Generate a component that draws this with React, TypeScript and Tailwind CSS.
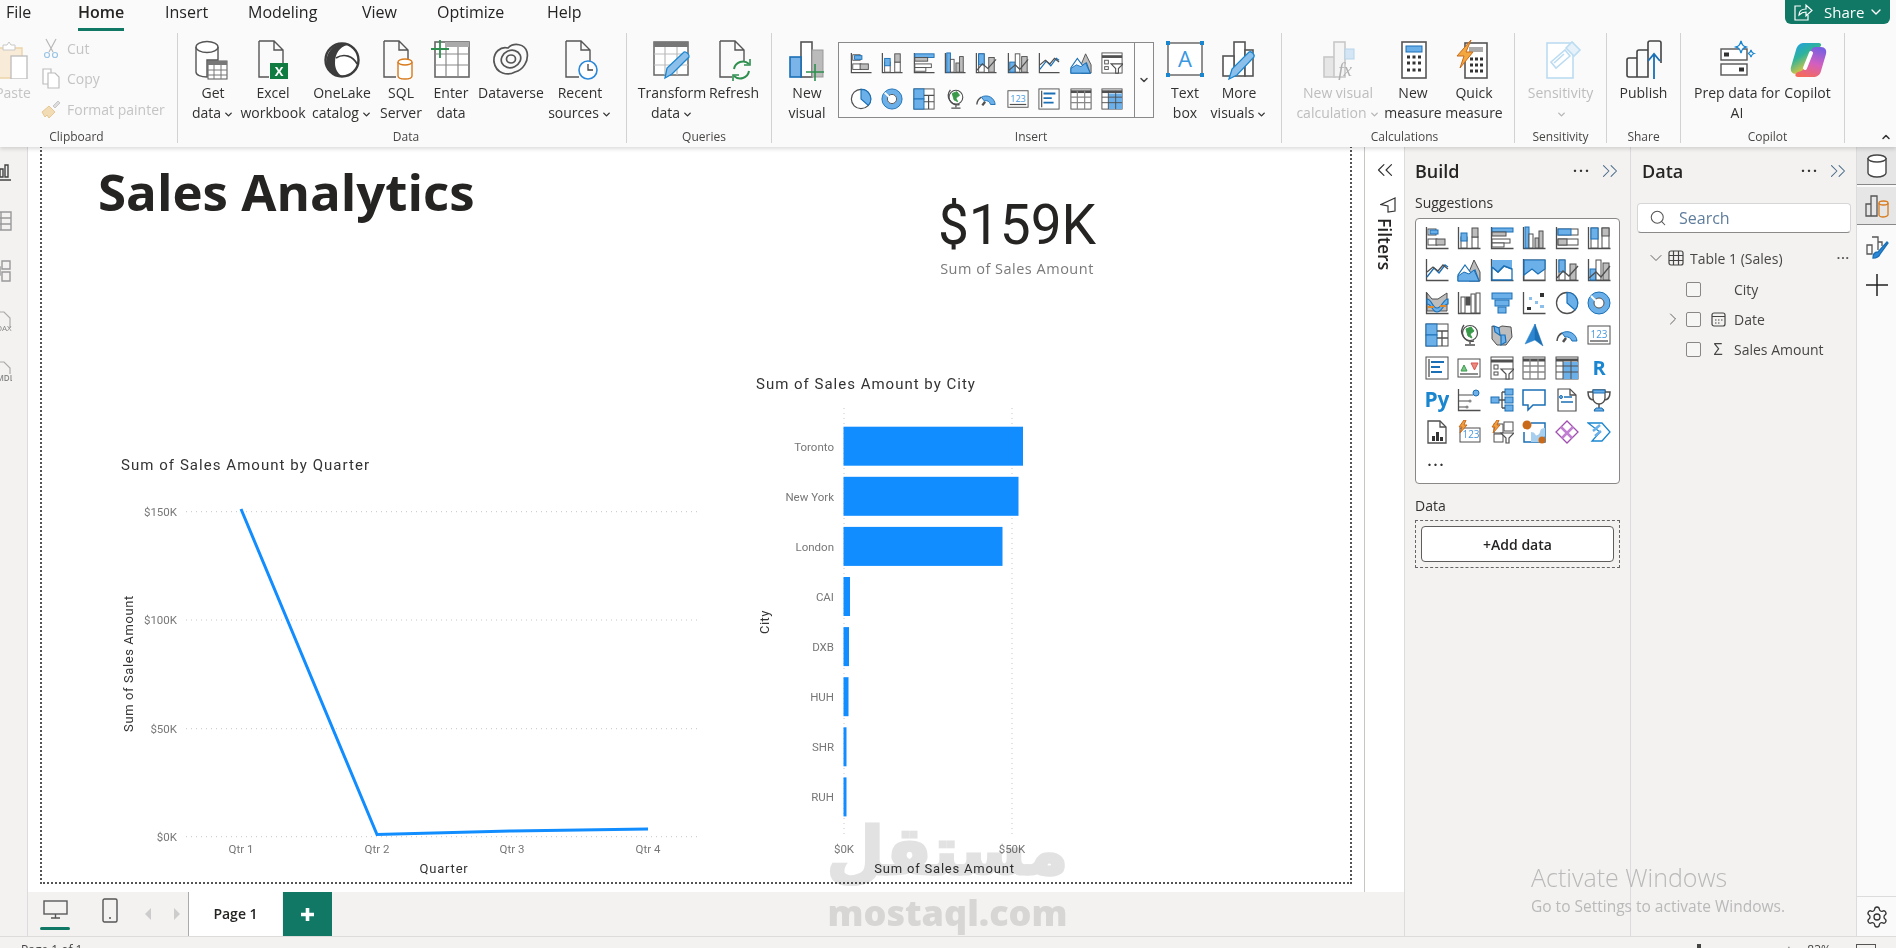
import React from 'react';
import { ChevronDown, ChevronRight, ChevronUp, ChevronsLeft, ChevronsRight, Search, Settings } from 'lucide-react';

const D = '#4f4f4f';
const BL = '#1a6fb5';

function r(x: number, y: number, w: number, h: number, k: 'b' | 'g' | 'w' | 'd') {
  const fill = k === 'b' ? '#6cb0ea' : k === 'g' ? '#bdbdbd' : k === 'd' ? '#4f4f4f' : '#ffffff';
  const stroke = k === 'b' ? BL : D;
  return <rect x={x} y={y} width={w} height={h} fill={fill} stroke={stroke} strokeWidth="1" />;
}
const ax = <path d="M1.5 1v21.5H23.5" fill="none" stroke={D} strokeWidth="1.3" />;
const P = (d: string, c = D, w = 1.3, f = 'none') => <path d={d} stroke={c} strokeWidth={w} fill={f} />;
const T = (s: string, x: number, y: number, size: number, c = '#1a86d0', weight = 700) => (
  <text x={x} y={y} fontSize={size} fill={c} fontWeight={weight} textAnchor="middle" className="font-['Open_Sans',sans-serif]">{s}</text>
);

const viz: Record<string, React.ReactNode> = {
  stackBar: <>{ax}{r(3, 3, 8, 6, 'w')}{r(5, 4, 8, 4, 'b')}{r(3, 13, 9, 6, 'w')}{r(11, 13, 9, 6, 'g')}</>,
  stackCol: <>{ax}{r(4, 11, 6, 11, 'w')}{r(4, 7, 6, 8, 'b')}{r(15, 11, 6, 11, 'w')}{r(15, 2, 6, 9, 'g')}</>,
  clusBar: <>{ax}{r(2, 2, 21, 4, 'b')}{r(2, 6, 14, 4, 'g')}{r(2, 13, 18, 4, 'w')}{r(2, 17, 12, 4, 'w')}</>,
  clusCol: <>{ax}{r(3, 1, 4, 21, 'b')}{r(7, 8, 4, 14, 'w')}{r(13, 12, 4, 10, 'g')}{r(17, 5, 4, 17, 'g')}</>,
  fullBar: <>{ax}{r(3, 3, 20, 6, 'w')}{r(3, 3, 13, 6, 'b')}{r(3, 13, 20, 6, 'w')}{r(3, 13, 9, 6, 'g')}</>,
  fullCol: <>{ax}{r(4, 2, 7, 20, 'w')}{r(4, 2, 7, 11, 'b')}{r(15, 2, 7, 20, 'w')}{r(15, 2, 7, 8, 'g')}</>,
  line: <>{ax}{P('M2 19l7-9 5 5 6-8 3 2', BL)}{P('M2 14l6-5 5 4 5-6 5 4')}</>,
  area: <>{P('M12 14l5-12 6 12v9H12z', D, 1, '#bdbdbd')}{P('M1 23v-6L8 7l6 8 4-3 4 11z', BL, 1.2, '#ffffff')}{P('M1 23v-5l6-4 5 2 5-4 5 11z', BL, 1, '#6cb0ea')}</>,
  stArea: <>{ax}{P('M2 9l6 5 6-6 8 3v11H2z', BL, 1.3, '#ffffff')}{P('M2 2v7l6 5 6-6 8 3V2z', 'none', 0, '#6cb0ea')}{P('M2 9l6 5 6-6 8 3', BL, 1.6)}</>,
  fullArea: <>{ax}{r(2, 2, 21, 20, 'w')}{P('M2 2h21v9l-7 5-6-5-8 6z', BL, 1.2, '#6cb0ea')}</>,
  lineStack: <>{ax}{r(4, 2, 6, 20, 'w')}{r(4, 2, 6, 12, 'b')}{r(15, 6, 6, 16, 'g')}{P('M2 20l6-7 6 5 9-10')}</>,
  lineClus: <>{ax}{r(3, 11, 6, 11, 'b')}{r(9, 2, 5, 20, 'w')}{r(16, 5, 6, 17, 'g')}{P('M2 20l7-6 5 5 9-11')}</>,
  ribbon: <>{ax}{P('M2 2l5 6 6 0 9-6v18H2z', D, 1, '#bdbdbd')}{P('M2 8c5 0 5 9 10 9s6-9 11-9v5c-5 0-6 8-11 8S7 13 2 13z', BL, 1.2, '#6cb0ea')}{P('M3 16h6M15 15h6', '#e08a2c', 2)}</>,
  waterfall: <>{ax}{r(4, 6, 4, 16, 'w')}{r(9, 6, 4, 8, 'd')}{r(14, 3, 4, 19, 'w')}{r(19, 2, 4, 20, 'w')}</>,
  funnel: <>{r(2, 2, 20, 6, 'b')}{r(5, 9, 14, 6, 'b')}{r(8, 16, 8, 6, 'b')}</>,
  scatter: <>{ax}<rect x="5" y="16" width="4" height="3" fill="#333" /><rect x="7" y="6" width="3" height="3" fill="#8cc0ea" /><rect x="13" y="10" width="3" height="3" fill="#8cc0ea" /><rect x="18" y="2" width="4" height="4" fill="#333" /><rect x="18" y="14" width="4" height="3" fill="#8cc0ea" /></>,
  pie: <><circle cx="12" cy="12" r="10.5" fill="#fff" stroke={D} strokeWidth="1.3" />{P('M12 1.5A10.5 10.5 0 0 1 20 19l-8-7z', BL, 1.2, '#6cb0ea')}</>,
  donut: <><circle cx="12" cy="12" r="8" fill="none" stroke="#6cb0ea" strokeWidth="6" /><circle cx="12" cy="12" r="11" fill="none" stroke={BL} strokeWidth="1" /><circle cx="12" cy="12" r="5" fill="#fff" stroke={D} strokeWidth="1" />{P('M4 5l5 5', '#fff', 2)}</>,
  tree: <>{r(1, 1, 22, 22, 'w')}{r(1, 1, 11, 11, 'b')}{r(1, 12, 11, 11, 'b')}{P('M12 8h11M17 8v15M12 15h11')}</>,
  globe: <><circle cx="13" cy="10" r="7.5" fill="#fff" stroke={D} strokeWidth="1.2" />{P('M9 6l5-2 3 4-4 3 2 4-4-2z', '#3a9a4a', 1, '#3a9a4a')}{P('M7 2a10 10 0 0 0 10 16M13 18v3M8 22h10', D, 1.4)}</>,
  map: <>{P('M2 3l6 2 4-2 9 1 1 10-6 8-9 0-5-6z', D, 1, '#bdbdbd')}{P('M4 3l5 2 1 7 5 0 1 7-5 3 0-9-6-4z', BL, 1.2, '#6cb0ea')}</>,
  arrow: <>{P('M13 1L3 21l10-4z', '#2f86d0', .5, '#2f86d0')}{P('M13 1l8 22-8-6z', '#1a6fb5', .5, '#1a6fb5')}</>,
  gauge: <>{P('M2 18a10 10 0 0 1 5-8', D, 1.5)}{P('M7 10a10 10 0 0 1 15 8h-5a6 6 0 0 0-7-4z', BL, 1, '#6cb0ea')}{P('M8 19l3-4', D, 2.5)}</>,
  card: <>{r(1, 3, 22, 18, 'w')}{P('M3 18h18')}{T('123', 12, 15, 10, '#4a9ade', 400)}</>,
  multi: <>{r(1, 1, 22, 22, 'w')}{P('M4 3v18')}{P('M6 6h13M6 11h9M6 16h11', BL, 2)}</>,
  kpi: <>{r(1, 3, 22, 18, 'w')}{P('M3 18h18')}{P('M4 15l3-6 3 6z', '#3a9a4a', 1, '#7ac48a')}{P('M14 7h7l-3.5 7z', '#d9534f', 1, '#e88a80')}</>,
  slicer: <>{r(1, 1, 22, 22, 'w')}{P('M1 5h22', D, 3)}{r(4, 9, 4, 4, 'w')}{r(4, 16, 4, 3, 'w')}{P('M11 13h13l-5 5v5h-3v-5z', D, 1.2, '#fff')}</>,
  table: <>{r(1, 1, 22, 22, 'w')}{P('M1 4h22', D, 3)}{P('M1 10h22M1 16h22M8 3v20M16 3v20', '#888')}</>,
  matrix: <>{r(1, 1, 22, 22, 'w')}{P('M1 4h22', D, 3)}<rect x="8" y="6" width="15" height="17" fill="#6cb0ea" />{P('M1 10h22M1 16h22M8 3v20M16 3v20', D, 1)}</>,
  r: <>{T('R', 12, 19, 20)}</>,
  py: <>{T('Py', 12, 19, 21)}</>,
  key: <>{ax}{P('M2 7h14M2 13h10M2 19h7', D, 1.2)}<circle cx="19" cy="5" r="3" fill="#6cb0ea" stroke={BL} /><circle cx="13" cy="13" r="1.6" fill="#888" /><circle cx="10" cy="19" r="1.6" fill="#888" /></>,
  decomp: <>{r(1, 9, 8, 6, 'b')}{r(15, 1, 8, 6, 'b')}{r(15, 9, 8, 6, 'b')}{r(15, 17, 8, 6, 'b')}{P('M9 12h6M12 4v16M12 4h3M12 20h3')}</>,
  qa: <>{P('M1 2h22v15H11l-5 5v-5H1z', BL, 1.5, '#fff')}</>,
  narr: <>{P('M3 1h12l6 6v16H3z', D, 1.2, '#fff')}{P('M15 1v6h6')}<circle cx="6" cy="9" r="1.5" fill="#6cb0ea" stroke={BL} />{P('M9 9h8M6 14h12', BL, 1.3)}</>,
  goal: <>{P('M6 2h12v8a6 6 0 0 1-12 0z', D, 1.3, '#fff')}{P('M6 2h12v3H6z', BL, 1, '#6cb0ea')}{P('M6 4H1c0 5 2 8 6 8M18 4h5c0 5-2 8-6 8M12 16v4M7 22h10', D, 1.5)}{P('M9 20h6l2 3H7z', BL, 1, '#6cb0ea')}</>,
  page: <>{P('M3 1h12l6 6v16H3z', D, 1.3, '#fff')}{P('M15 1v6h6')}<rect x="7" y="16" width="3" height="5" fill="#333" /><rect x="11" y="12" width="3" height="9" fill="#333" /><rect x="15" y="17" width="3" height="4" fill="#333" /></>,
  lcard: <>{r(3, 8, 20, 14, 'w')}{T('123', 14, 18, 10, '#4a9ade', 400)}{P('M7 0L2 7h3l-2 6 7-8H7l2-5z', '#c96a1a', 1, '#f0a040')}</>,
  lslicer: <>{r(4, 4, 9, 9, 'w')}{r(14, 2, 9, 9, 'w')}{r(4, 14, 9, 8, 'w')}{P('M11 13h13l-5 5v5h-3v-5z', D, 1.2, '#fff')}{P('M7 0L2 7h3l-2 6 7-8H7l2-5z', '#c96a1a', 1, '#f0a040')}</>,
  azure: <>{P('M9 3h14v19H2V12', BL, 1.5, '#fff')}{P('M9 12c6 0 3 6 8 2 2-2 0-6 6-6v8l-6 6H9z', '#6cb0ea', 0, '#a8cfee')}<circle cx="5" cy="5" r="4.5" fill="#c96a1a" /><circle cx="20" cy="20" r="3.5" fill="#c96a1a" /></>,
  papps: <>{P('M12 1l11 11-11 11L1 12z', '#a04fb0', 1.3, '#fff')}{P('M6 7l11 11M18 7L7 18', '#c07fd0', 2.5)}</>,
  pauto: <>{P('M1 3h14l8 9-8 9H5l8-9z', '#1a86d0', 1.3, '#fff')}{P('M6 11l7-6M8 16l6-5', '#6cb0ea', 2.5)}</>,
};

function Viz({ name, size = 24 }: { name: string; size?: number }) {
  return <svg width={size} height={size} viewBox="0 0 24 24">{viz[name]}</svg>;
}

const suggestions = [
  'stackBar', 'stackCol', 'clusBar', 'clusCol', 'fullBar', 'fullCol',
  'line', 'area', 'stArea', 'fullArea', 'lineStack', 'lineClus',
  'ribbon', 'waterfall', 'funnel', 'scatter', 'pie', 'donut',
  'tree', 'globe', 'map', 'arrow', 'gauge', 'card',
  'multi', 'kpi', 'slicer', 'table', 'matrix', 'r',
  'py', 'key', 'decomp', 'qa', 'narr', 'goal',
  'page', 'lcard', 'lslicer', 'azure', 'papps', 'pauto',
];
const galleryIcons = [
  'stackBar', 'stackCol', 'clusBar', 'clusCol', 'lineStack', 'lineClus', 'line', 'area', 'slicer',
  'pie', 'donut', 'tree', 'globe', 'gauge', 'card', 'multi', 'table', 'matrix',
];

const S = { fill: 'none', stroke: '#555', strokeWidth: 1.4 };
const bars = (c = '#555', f = '#fff') => (
  <>
    <rect x="15" y="2" width="11" height="34" fill={f} stroke={c} strokeWidth="1.6" />
    <rect x="4" y="16" width="11" height="20" fill={f} stroke={c} strokeWidth="1.6" />
  </>
);

const large: Record<string, React.ReactNode> = {
  getData: (
    <>
      <path d="M3 7v25c0 3 5 5 11 5V20h11V7" {...S} fill="#fff" />
      <ellipse cx="14" cy="7" rx="11" ry="5.5" {...S} fill="#fff" />
      <rect x="15" y="21" width="19" height="18" fill="#fff" stroke="#555" />
      <rect x="15" y="21" width="19" height="4" fill="#777" />
      <path d="M15 30h19M15 35h19M21 25v14M28 25v14" stroke="#777" />
    </>
  ),
  excel: (
    <>
      <path d="M6 1h15l9 9v16 M6 1v36h10 M21 1v9h9" {...S} />
      <rect x="17" y="23" width="18" height="16" fill="#107c41" />
      <text x="26" y="36" fontSize="13" fontWeight="700" fill="#fff" textAnchor="middle" className="font-['Open_Sans',sans-serif]">X</text>
    </>
  ),
  onelake: (
    <>
      <circle cx="20" cy="20" r="16.5" fill="#fff" stroke="#3c3c3c" strokeWidth="2.4" />
      <path d="M5 17C8 6 18 1 25 5c-7 2-12 8-12 18 0 6 3 11 7 13C8 36 2 27 5 17z" fill="#3c3c3c" />
      <path d="M14 18c8-5 17-2 21 6" fill="none" stroke="#3c3c3c" strokeWidth="1.6" />
    </>
  ),
  sql: (
    <>
      <path d="M3 1h15l9 9v12 M3 1v36h12 M18 1v9h9" {...S} />
      <path d="M17 22v14c0 2 3 3 7 3s7-1 7-3V22" fill="#fff" stroke="#d87a1e" strokeWidth="1.4" />
      <ellipse cx="24" cy="22" rx="7" ry="3" fill="#fff" stroke="#d87a1e" strokeWidth="1.4" />
    </>
  ),
  enter: (
    <>
      <rect x="4" y="2" width="34" height="35" fill="#fff" stroke="#666" strokeWidth="1.6" />
      <rect x="14" y="2" width="24" height="5" fill="#aaa" />
      <path d="M4 14h34M4 25h34M15 7v30M27 7v30" stroke="#888" strokeWidth="1.2" />
      <path d="M0 9h18M9 0v18" stroke="#2f8f4f" strokeWidth="1.8" />
    </>
  ),
  dataverse: (
    <g fill="none" stroke="#555" strokeWidth="1.7">
      <path d="M3 22C2 12 10 6 17 8c6-6 17-4 19 4 2 9-4 18-12 20-7 4-19 2-21-10z" />
      <ellipse cx="20" cy="19" rx="10" ry="8.5" transform="rotate(-25 20 19)" />
      <ellipse cx="20" cy="19" rx="4.5" ry="4" />
    </g>
  ),
  recent: (
    <>
      <path d="M6 1h15l9 9v14 M6 1v36h13 M21 1v9h9" {...S} />
      <circle cx="28" cy="30" r="9" fill="#fff" stroke="#2b88d8" strokeWidth="1.6" />
      <path d="M28 24v6h5" fill="none" stroke="#444" strokeWidth="1.3" />
    </>
  ),
  transform: (
    <>
      <rect x="2" y="2" width="34" height="33" fill="#fff" stroke="#666" strokeWidth="1.5" />
      <rect x="2" y="2" width="34" height="5" fill="#777" />
      <path d="M2 14h34M2 25h34M13 7v28M25 7v28" stroke="#bbb" strokeWidth="1.2" />
      <path d="M13 38l2-10 17-16c2-1 6 3 5 5L20 34z" fill="#8cc0ea" stroke="#1a86d0" strokeWidth="1.3" />
    </>
  ),
  refresh: (
    <>
      <path d="M6 1h15l9 9v12 M6 1v36h12 M21 1v9h9" {...S} />
      <path d="M20 29a9 9 0 0 1 15-5M35 31a9 9 0 0 1-15 5" fill="none" stroke="#2f8f4f" strokeWidth="2" />
      <path d="M36 19v6h-6M19 41v-6h6" fill="none" stroke="#2f8f4f" strokeWidth="1.6" />
    </>
  ),
  newVisual: (
    <>
      <rect x="14" y="2" width="11" height="35" fill="#fff" stroke="#555" strokeWidth="1.6" />
      <rect x="3" y="17" width="11" height="20" fill="#7ab4e8" stroke="#1a6fb5" strokeWidth="1.6" />
      <rect x="25" y="10" width="11" height="27" fill="#bbb" stroke="#999" />
      <path d="M19 32h18M28 24v17" stroke="#2f8f4f" strokeWidth="1.6" />
    </>
  ),
  textBox: (
    <>
      <rect x="3" y="3" width="34" height="32" fill="#fff" stroke="#555" strokeWidth="1.3" />
      {[[3, 3], [37, 3], [3, 35], [37, 35]].map(([x, y]) => <rect key={`${x}${y}`} x={x - 2} y={y - 2} width="4" height="4" fill="#1a86d0" />)}
      <text x="20" y="27" fontSize="22" fill="#3a97e0" textAnchor="middle" className="font-['Open_Sans',sans-serif]">A</text>
    </>
  ),
  more: (
    <>
      {bars()}
      <rect x="26" y="10" width="8" height="26" fill="#fff" stroke="#555" strokeWidth="1.6" />
      <path d="M10 39l3-10 17-17c2-1 6 2 5 5L18 35z" fill="#8cc0ea" stroke="#1a86d0" strokeWidth="1.3" />
    </>
  ),
  calc: (
    <>
      <rect x="6" y="17" width="11" height="20" fill="#e6e6e6" stroke="#c8c8c8" strokeWidth="1.6" />
      <rect x="16" y="2" width="11" height="35" fill="#f4f4f4" stroke="#c8c8c8" strokeWidth="1.6" />
      <rect x="27" y="9" width="9" height="10" fill="#d4e6f5" stroke="#b8d4ea" />
      <text x="27" y="36" fontSize="19" fontStyle="italic" fill="#b0b0b0" textAnchor="middle" className="font-['Liberation_Serif',serif]">fx</text>
    </>
  ),
  measure: (
    <>
      <rect x="9" y="2" width="24" height="36" fill="#fff" stroke="#555" strokeWidth="1.6" />
      <rect x="13" y="6" width="16" height="6" fill="#6cb0ea" stroke="#1a6fb5" />
      <path d="M14 17h3M19.500 17h3M25 17h3M14 23h3M19.500 23h3M25 23h3M14 30h3M19.500 30h3M25 30h3" stroke="#333" strokeWidth="3" />
    </>
  ),
  quick: (
    <>
      <rect x="11" y="3" width="22" height="35" fill="#fff" stroke="#555" strokeWidth="1.6" />
      <rect x="15" y="7" width="14" height="5" fill="#aaa" />
      <path d="M16 19h3M21 19h3M26 19h3M16 25h3M21 25h3M26 25h3M16 31h3M21 31h3M26 31h3" stroke="#333" strokeWidth="3" />
      <path d="M17 0L3 16h7L6 28l13-16h-7l5-12z" fill="#f2a740" stroke="#c96a1a" strokeWidth="1" />
    </>
  ),
  sensitivity: (
    <>
      <rect x="6" y="3" width="26" height="35" fill="#fff" stroke="#bcdcf2" strokeWidth="1.6" />
      <path d="M10 22l14-12 5 6-14 12zM13 23l10-9" fill="#fff" stroke="#bcdcf2" strokeWidth="1.6" />
      <path d="M25 8l6-6 8 8-6 6z" fill="#e6f1fa" stroke="#bcdcf2" strokeWidth="1.6" />
    </>
  ),
  publish: (
    <>
      <path d="M13 37V18h-8a2 2 0 0 0-2 2v15a2 2 0 0 0 2 2h8h11V3a2 2 0 0 1 2-2h9a2 2 0 0 1 2 2v20 M13 18V12a2 2 0 0 1 2-2h9" fill="none" stroke="#444" strokeWidth="1.6" />
      <path d="M30 39V14M24 21l6-7 6 7" fill="none" stroke="#1a6fb5" strokeWidth="1.8" />
    </>
  ),
  prep: (
    <>
      <rect x="4" y="9" width="26" height="11" fill="#fff" stroke="#555" strokeWidth="1.4" />
      <rect x="7" y="12.500" width="5" height="4" fill="#333" />
      <rect x="4" y="24" width="26" height="11" fill="#fff" stroke="#555" strokeWidth="1.4" />
      <rect x="22" y="27.500" width="5" height="4" fill="#333" />
      <path d="M24 1c1 4 2 5 5 6-3 1-4 2-5 6-1-4-2-5-5-6 3-1 4-2 5-6z" fill="#fff" stroke="#1a86d0" strokeWidth="1.4" />
      <path d="M34 10c.6 2.500 1 3 3 3.500-2 .6-2.400 1-3 3.500-.6-2.500-1-3-3-3.500 2-.5 2.400-1 3-3.500z" fill="#fff" stroke="#1a86d0" strokeWidth="1.2" />
    </>
  ),
  copilot: (
    <>
      <defs>
        <linearGradient id="cpA" x1="0" y1="0" x2="0.6" y2="1">
          <stop offset="0" stopColor="#1f9cf0" />
          <stop offset=".45" stopColor="#2fb39a" />
          <stop offset=".8" stopColor="#c8c34a" />
          <stop offset="1" stopColor="#f5a03a" />
        </linearGradient>
        <linearGradient id="cpB" x1="0.6" y1="0" x2="0.3" y2="1">
          <stop offset="0" stopColor="#7a5fe0" />
          <stop offset=".5" stopColor="#d25fc0" />
          <stop offset="1" stopColor="#f56a5a" />
        </linearGradient>
      </defs>
      <path d="M15 3h16c3 0 3 4-1 5-5 1-8 5-9 10l-3 11c-1 3-3 5-6 5H8c-4 0-6-3-5-7l5-17c1-4 4-7 7-7z" fill="url(#cpA)" />
      <path d="M25 37H10c-3 0-4-3 0-5 5-1 8-4 9-9l3-11c1-3 3-5 6-5h5c4 0 6 3 5 7l-5 17c-1 4-4 6-8 6z" fill="url(#cpB)" />
      <path d="M23 13l-6 15" stroke="#fff" strokeWidth="4" strokeLinecap="round" />
    </>
  ),
};

function Big({ name }: { name: string }) {
  return <svg width="40" height="40" viewBox="0 0 40 40" className="overflow-visible">{large[name]}</svg>;
}

const Caret = ({ muted }: { muted?: boolean }) => (
  <ChevronDown className={`ml-[2px] inline h-[11px] w-[11px] ${muted ? 'text-[#b5b5b5]' : 'text-[#333]'}`} strokeWidth={3} />
);

type BtnProps = { icon: string; lines: React.ReactNode[]; w: string; muted?: boolean };

function RibbonBtn({ icon, lines, w, muted }: BtnProps) {
  return (
    <div className={`flex shrink-0 flex-col items-center pt-2 ${w} ${muted ? 'text-[#bdbdbd]' : 'text-[#323130]'}`}>
      <div className="flex h-[38px] w-[40px] items-center justify-center"><Big name={icon} /></div>
      <div className="mt-1 whitespace-nowrap text-center text-[14px] leading-[20px]">
        {lines.map((l, i) => <div key={i}>{l}</div>)}
      </div>
    </div>
  );
}

function Group({ title, w, children }: { title: string; w: string; children: React.ReactNode }) {
  return (
    <div className={`mt-[7px] h-[110px] shrink-0 border-r border-[#d2d2d2] ${w}`}>
      <div className="flex h-[94px]">{children}</div>
      <div className="h-5 text-center text-[12px] leading-5 text-[#484644]">{title}</div>
    </div>
  );
}

function Clipboard() {
  const rows = [
    { label: 'Cut', icon: <g fill="none" stroke="#b8b8b8" strokeWidth="1.2"><path d="M5 1l7 13M15 1L8 14" /><circle cx="6" cy="17" r="2.500" stroke="#9cc4e4" /><circle cx="14" cy="17" r="2.500" stroke="#9cc4e4" /></g> },
    { label: 'Copy', icon: <g fill="#fff" stroke="#bcbcbc" strokeWidth="1.2"><path d="M2 1h8v15H2z" /><path d="M7 5h7l4 4v11H7z" /></g> },
    { label: 'Format painter', icon: <g stroke="#c8c8c8"><path d="M12 7l5-5 2 2-5 5z" fill="#ddd" /><path d="M1 13l7-6 6 6-6 6-2-3-2 2z" fill="#f2dcb6" stroke="#e5c894" /></g> },
  ];
  return (
    <div className="ml-[10px] flex flex-col">
      {rows.map((row) => (
        <div key={row.label} className="flex h-[30.5px] items-center text-[14px] text-[#c4c4c4]">
          <svg width="20" height="21" viewBox="0 0 20 21">{row.icon}</svg>
          <span className="ml-[6px] whitespace-nowrap">{row.label}</span>
        </div>
      ))}
    </div>
  );
}

function Ribbon() {
  return (
    <div className="flex h-[121px]">
      <Group title="Clipboard" w="-ml-[24px] w-[202px]">
        <div className="ml-[19px] flex w-[36px] shrink-0 flex-col items-center pt-2 text-[#c4c4c4]">
          <svg width="36" height="38" viewBox="0 0 36 38">
            <path d="M1 7h26v30H1z" fill="#f8ecd8" stroke="#ecd3a8" strokeWidth="1.4" />
            <path d="M8 9V4h4l2-3 2 3h4v5z" fill="#fff" stroke="#c8c8c8" />
            <rect x="16" y="15" width="16" height="23" fill="#fff" stroke="#bcbcbc" strokeWidth="1.3" />
          </svg>
          <div className="mt-1 text-[14px] leading-[20px]">Paste</div>
        </div>
        <Clipboard />
      </Group>
      <Group title="Data" w="w-[449px] pl-[8px]">
        <RibbonBtn icon="getData" w="w-[54px]" lines={['Get', <>data<Caret /></>]} />
        <RibbonBtn icon="excel" w="w-[66px]" lines={['Excel', 'workbook']} />
        <RibbonBtn icon="onelake" w="w-[72px]" lines={['OneLake', <>catalog<Caret /></>]} />
        <RibbonBtn icon="sql" w="w-[46px]" lines={['SQL', 'Server']} />
        <RibbonBtn icon="enter" w="w-[54px]" lines={['Enter', 'data']} />
        <RibbonBtn icon="dataverse" w="w-[66px]" lines={['Dataverse']} />
        <RibbonBtn icon="recent" w="w-[72px]" lines={['Recent', <>sources<Caret /></>]} />
      </Group>
      <Group title="Queries" w="w-[145px] pl-[10px]">
        <RibbonBtn icon="transform" w="w-[70px]" lines={['Transform', <>data<Caret /></>]} />
        <RibbonBtn icon="refresh" w="w-[54px]" lines={['Refresh']} />
      </Group>
      <Group title="Insert" w="w-[510px] pl-[9px]">
        <RibbonBtn icon="newVisual" w="w-[52px]" lines={['New', 'visual']} />
        <div className="ml-[5px] mt-[9px] flex h-[76px] w-[316px] shrink-0 border border-[#8a8a8a] bg-white/40">
          <div className="grid w-[295px] grid-cols-9 content-between px-[6px] pb-[7px] pt-[9px]">
            {galleryIcons.map((n, i) => (
              <div key={i} className="flex justify-center"><Viz name={n} size={22} /></div>
            ))}
          </div>
          <div className="flex flex-1 items-center justify-center border-l border-[#8a8a8a]">
            <ChevronDown className="h-3 w-3 text-[#444]" strokeWidth={3} />
          </div>
        </div>
        <RibbonBtn icon="textBox" w="ml-[4px] w-[54px]" lines={['Text', 'box']} />
        <RibbonBtn icon="more" w="w-[54px]" lines={['More', <>visuals<Caret /></>]} />
      </Group>
      <Group title="Calculations" w="w-[233px] pl-[13px]">
        <RibbonBtn icon="calc" w="w-[86px]" muted lines={['New visual', <>calculation<Caret muted /></>]} />
        <RibbonBtn icon="measure" w="w-[64px]" lines={['New', 'measure']} />
        <RibbonBtn icon="quick" w="w-[58px]" lines={['Quick', 'measure']} />
      </Group>
      <Group title="Sensitivity" w="w-[92px]">
        <RibbonBtn icon="sensitivity" w="w-full" muted lines={['Sensitivity', <Caret muted />]} />
      </Group>
      <Group title="Share" w="w-[74px]">
        <RibbonBtn icon="publish" w="w-full" lines={['Publish']} />
      </Group>
      <Group title="Copilot" w="w-[164px] pl-[10px]">
        <RibbonBtn icon="prep" w="w-[92px]" lines={['Prep data for', 'AI']} />
        <RibbonBtn icon="copilot" w="w-[49px]" lines={['Copilot']} />
      </Group>
      <div className="flex flex-1 justify-end pr-[4px] pt-[105px]">
        <ChevronUp className="h-3 w-3 text-[#333]" strokeWidth={3} />
      </div>
    </div>
  );
}

function Header() {
  const tabs: [string, string][] = [
    ['File', 'w-[72px]'], ['Home', 'w-[87px]'], ['Insert', 'w-[83px]'], ['Modeling', 'w-[114px]'],
    ['View', 'w-[75px]'], ['Optimize', 'w-[110px]'], ['Help', 'w-[60px]'],
  ];
  return (
    <div className="relative z-10 h-[147px] shrink-0 bg-[#fafafa] shadow-[0_2px_4px_rgba(0,0,0,0.14)]">
      <div className="flex h-[26px] pl-[6px]">
        {tabs.map(([t, w]) => (
          <div key={t} className={w}>
            <div className={`inline-block h-[26px] text-[16px] leading-[14px] text-[#252423] ${t === 'Home' ? 'border-b-[3px] border-[#117865] font-semibold' : ''}`}>{t}</div>
          </div>
        ))}
        <div className="ml-auto mr-[6px] flex h-[24px] w-[105px] items-center rounded-b-md bg-[#117865] pl-[9px] text-white">
          <svg width="19" height="18" viewBox="0 0 19 18" fill="none" stroke="#fff" strokeWidth="1.2">
            <path d="M7 3H1v14h13v-5" />
            <path d="M5 12c0-4 3-6 7-6V2l6 5.500-6 5.500V9c-3 0-5 1-7 3z" />
          </svg>
          <span className="ml-[11px] text-[15px]">Share</span>
          <ChevronDown className="ml-[4px] h-4 w-4" strokeWidth={2} />
        </div>
      </div>
      <Ribbon />
    </div>
  );
}

function LeftRail() {
  return (
    <div className="flex w-[28px] shrink-0 flex-col items-start gap-[28px] border-r border-[#dcdcdc] bg-[#f3f2f1] pt-[13px]">
      <svg width="22" height="22" viewBox="0 0 22 22" className="-ml-[10px]"><path d="M1 20h20M10 17V9h3v8zM15 17V5h3v12z" fill="none" stroke="#444" strokeWidth="1.4" /></svg>
      <svg width="22" height="22" viewBox="0 0 22 22" className="-ml-[10px]"><path d="M1 2h20v18H1zM1 8h20M1 14h20M11 2v18" fill="none" stroke="#999" strokeWidth="1.4" /></svg>
      <svg width="22" height="22" viewBox="0 0 22 22" className="-ml-[10px]"><path d="M6 1h8v8H6zM6 12h8v9H6zM0 7h4v8H0z M8 0" fill="none" stroke="#999" strokeWidth="1.4" transform="translate(6 0)" /></svg>
      <svg width="22" height="22" viewBox="0 0 22 22" className="-ml-[10px]">
        <path d="M4 2h10l6 6v10" fill="none" stroke="#aaa" strokeWidth="1.2" />
        <text x="14" y="21" fontSize="8" fill="#888" textAnchor="middle" className="font-['Open_Sans',sans-serif]">DAX</text>
      </svg>
      <svg width="22" height="22" viewBox="0 0 22 22" className="-ml-[10px]">
        <path d="M4 2h10l6 6v6" fill="none" stroke="#aaa" strokeWidth="1.2" />
        <text x="13" y="21" fontSize="8" fill="#888" textAnchor="middle" fontWeight="600" className="font-['Open_Sans',sans-serif]">TMDL</text>
      </svg>
    </div>
  );
}

const din = "font-['Roboto',sans-serif]";

function LineChart() {
  const ticks: [string, number][] = [['$150K', 511.7], ['$100K', 620], ['$50K', 728.7], ['$0K', 836.7]];
  const cats: [string, number][] = [['Qtr 1', 241], ['Qtr 2', 377], ['Qtr 3', 512], ['Qtr 4', 648]];
  return (
    <svg width="600" height="435" viewBox="110 445 600 435" className={`absolute left-[82px] top-[298px] ${din}`}>
      <text x="121" y="470" fontSize="15" letterSpacing="1.05" fill="#333">Sum of Sales Amount by Quarter</text>
      {ticks.map(([t, y]) => (
        <g key={t}>
          <line x1="186" x2="699" y1={y} y2={y} stroke="#c8c6c4" strokeDasharray="1 4" />
          <text x="177" y={y + 4} fontSize="11.500" fill="#777" textAnchor="end">{t}</text>
        </g>
      ))}
      {cats.map(([t, x]) => <text key={t} x={x} y="853" fontSize="11.500" fill="#777" textAnchor="middle">{t}</text>)}
      <polyline points="241,509 377,834.5 512,831 648,829" fill="none" stroke="#118dff" strokeWidth="3" />
      <text x="444" y="873" fontSize="13" letterSpacing="0.8" fill="#333" textAnchor="middle">Quarter</text>
      <text transform="translate(133 663.500) rotate(-90)" fontSize="13" letterSpacing="0.6" fill="#333" textAnchor="middle">Sum of Sales Amount</text>
    </svg>
  );
}

const cities: [string, number][] = [
  ['Toronto', 179.5], ['New York', 175], ['London', 159], ['CAI', 6.5], ['DXB', 5.5], ['HUH', 5], ['SHR', 3], ['RUH', 3],
];

function BarChart() {
  return (
    <svg width="310" height="510" viewBox="750 370 310 510" className={`absolute left-[722px] top-[223px] ${din}`}>
      <text x="756" y="388.500" fontSize="15" letterSpacing="1" fill="#333">Sum of Sales Amount by City</text>
      {[844, 1012].map((x) => <line key={x} x1={x} x2={x} y1="408" y2="838" stroke="#c8c6c4" strokeDasharray="1 4" />)}
      {cities.map(([c, w], i) => {
        const y = 426.700 + i * 50.100;
        return (
          <g key={c}>
            <rect x="843.500" y={y} width={w} height="39" fill="#118dff" />
            <text x="834" y={y + 24} fontSize="11.500" fill="#777" textAnchor="end">{c}</text>
          </g>
        );
      })}
      <text x="844" y="853" fontSize="11.500" fill="#777" textAnchor="middle">$0K</text>
      <text x="1012" y="853" fontSize="11.500" fill="#777" textAnchor="middle">$50K</text>
      <text x="944.500" y="873" fontSize="13" letterSpacing="0.8" fill="#333" textAnchor="middle">Sum of Sales Amount</text>
      <text transform="translate(769 622) rotate(-90)" fontSize="13" letterSpacing="0.5" fill="#333" textAnchor="middle">City</text>
    </svg>
  );
}

function Canvas() {
  return (
    <div className="relative flex-1 overflow-hidden bg-white">
      <div className="absolute -top-[10px] bottom-[8px] left-[12px] right-[12px] border-2 border-dotted border-[#555]" />
      <div className="absolute left-[70px] top-[14px] whitespace-nowrap text-[51px] font-bold leading-[60px] text-[#252423]">Sales Analytics</div>
      <div className="absolute left-[839px] top-[49px] w-[300px] text-center">
        <div className={`text-[55px] leading-[58px] text-[#252423] ${din}`}>$159K</div>
        <div className="mt-[5px] text-[14.500px] leading-[20px] tracking-[0.5px] text-[#7a7a7a]">Sum of Sales Amount</div>
      </div>
      <LineChart />
      <BarChart />
    </div>
  );
}

function PageTabs() {
  return (
    <div className="flex h-[44px] shrink-0 bg-[#f3f2f1]">
      <div className="flex w-[54px] flex-col items-center pt-[8px]">
        <svg width="25" height="20" viewBox="0 0 25 20" fill="none" stroke="#555" strokeWidth="1.4">
          <rect x="1" y="1" width="23" height="13" stroke="#5a5a5a" />
          <path d="M12.500 14v4M8 18h9" />
        </svg>
        <div className="mt-[7px] h-[3px] w-[30px] rounded bg-[#117865]" />
      </div>
      <div className="flex w-[56px] justify-center pt-[6px]">
        <svg width="16" height="25" viewBox="0 0 16 25" fill="none" stroke="#555" strokeWidth="1.4">
          <rect x="1" y="1" width="14" height="23" rx="1.500" />
          <path d="M7 20h2" />
        </svg>
      </div>
      <div className="flex w-[20px] items-center justify-center"><svg width="7" height="12" viewBox="0 0 7 12"><path d="M6 0v12L0 6z" fill="#ccc" /></svg></div>
      <div className="ml-[8px] flex w-[20px] items-center justify-center"><svg width="7" height="12" viewBox="0 0 7 12"><path d="M1 0v12l6-6z" fill="#ccc" /></svg></div>
      <div className="ml-[2px] flex h-[44px] w-[94px] flex-col border-l border-[#aaa] bg-white">
        <div className="flex-1 text-center text-[14px] font-semibold leading-[44px] text-[#252423]">Page 1</div>
        <div className="h-[5px] bg-[#117865]" />
      </div>
      <div className="ml-[1px] flex w-[49px] items-center justify-center bg-[#117865]">
        <svg width="15" height="15" viewBox="0 0 15 15"><path d="M7.500 1v13M1 7.500h13" stroke="#fff" strokeWidth="3.600" /></svg>
      </div>
    </div>
  );
}

function Filters() {
  return (
    <div className="flex w-[40px] shrink-0 flex-col items-center border-l border-[#c8c6c4] bg-white pt-[10px]">
      <ChevronsLeft className="h-[26px] w-[26px] text-[#333]" strokeWidth={1.1} />
      <svg width="16" height="16" viewBox="0 0 16 16" fill="none" stroke="#333" strokeWidth="1.2" className="mt-[14px] ml-[7px]">
        <path d="M15 1L1 7.500l7 1.500V15l7-1z" />
      </svg>
      <div className="mt-[5px] text-[17.500px] font-semibold leading-[22px] text-[#252423] [writing-mode:vertical-rl]">Filters</div>
    </div>
  );
}

const Dots = () => <span className="text-[14px] font-bold leading-none tracking-[2px] text-[#333]">···</span>;

function PaneHead({ title }: { title: string }) {
  return (
    <div className="flex h-[48px] items-center">
      <span className="text-[18px] font-semibold text-[#252423]">{title}</span>
      <div className="ml-auto flex items-center gap-[6px]">
        <Dots />
        <ChevronsRight className="-mr-[3px] h-[26px] w-[26px] text-[#4a6a8a]" strokeWidth={0.95} />
      </div>
    </div>
  );
}

function BuildPane() {
  return (
    <div className="w-[227px] shrink-0 border-l border-r border-[#dcdcdc] bg-[#f3f2f1] pl-[10px] pr-[10px]">
      <PaneHead title="Build" />
      <div className="h-4 text-[14px] leading-4 text-[#323130]">Suggestions</div>
      <div className="mt-[7px] h-[266px] rounded-sm border border-[#8a8886] bg-white pl-[8.500px] pt-[7px]">
        <div className="grid grid-cols-[repeat(6,24px)] gap-x-[8.500px] gap-y-[8.400px]">
          {suggestions.map((n, i) => <Viz key={i} name={n} />)}
          <div className="flex h-[24px] items-center justify-center"><Dots /></div>
        </div>
      </div>
      <div className="mt-[14px] h-4 text-[14px] leading-4 text-[#323130]">Data</div>
      <div className="mt-[6px] h-[48px] border border-dashed border-[#666] px-[5px] py-[5px]">
        <div className="flex h-[36px] items-center justify-center rounded-sm border border-[#605e5c] bg-white text-[14px] font-semibold text-[#252423]">+Add data</div>
      </div>
    </div>
  );
}

function Checkbox() {
  return <div className="ml-[8px] h-[15px] w-[15px] rounded-[2px] border border-[#8a8886] bg-white/30" />;
}

function Field({ name, icon, expand }: { name: string; icon?: React.ReactNode; expand?: boolean }) {
  return (
    <div className="flex h-[30px] items-center pl-[37px] text-[14px] text-[#484644]">
      <div className="flex w-[10px] justify-center">
        {expand ? <ChevronRight className="h-[20px] w-[20px] shrink-0 text-[#555]" strokeWidth={1.1} /> : null}
      </div>
      <Checkbox />
      <div className="ml-[9px] flex w-[16px] justify-center">{icon}</div>
      <span className="ml-[8px]">{name}</span>
    </div>
  );
}

function DataPane() {
  return (
    <div className="w-[225px] shrink-0 bg-[#f3f2f1]">
      <div className="pl-[11px] pr-[8px]"><PaneHead title="Data" /></div>
      <div className="ml-[6px] mr-[5px] mt-[8px] flex h-[30px] items-center rounded border border-[#d6d6d6] border-b-[#8a8a8a] bg-white pl-[11px] text-[16px] text-[#5e7d9c]">
        <Search className="h-[18px] w-[18px] text-[#555]" strokeWidth={1.4} />
        <span className="ml-[12px]">Search</span>
      </div>
      <div className="mt-[10px] flex h-[30px] items-center pl-[15px] text-[14px] text-[#484644]">
        <ChevronDown className="h-[20px] w-[20px] text-[#555]" strokeWidth={1.1} />
        <svg width="16" height="16" viewBox="0 0 16 16" fill="none" stroke="#444" strokeWidth="1.2" className="ml-[2px]">
          <rect x="1" y="1" width="14" height="14" rx="2" />
          <path d="M1 5.500h14M1 10.500h14M5.500 1v14M10.500 1v14" />
        </svg>
        <span className="ml-[6px]">Table 1 (Sales)</span>
        <span className="ml-auto mr-[6px] text-[12px] font-bold leading-none tracking-[1px] text-[#555]">···</span>
      </div>
      <div className="mt-[1px]">
        <Field name="City" />
        <Field
          name="Date"
          expand
          icon={(
            <svg width="15" height="15" viewBox="0 0 15 15" fill="none" stroke="#444" strokeWidth="1.2">
              <rect x="1" y="1" width="13" height="13" rx="2" />
              <path d="M1 4.500h13M4 8h1.500M7 8h1.500M10 8h1.500M4 11h1.500M7 11h1.500" />
            </svg>
          )}
        />
        <Field name="Sales Amount" icon={<span className="text-[16px] leading-none text-[#444]">Σ</span>} />
      </div>
    </div>
  );
}

function RightRail() {
  return (
    <div className="flex w-[40px] shrink-0 flex-col border-l border-[#dcdcdc] bg-[#fafafa]">
      <div className="flex h-[38px] items-center justify-center border-b border-[#888] bg-[#e6e6e6]">
        <svg width="20" height="24" viewBox="0 0 20 24" fill="#fff" stroke="#444" strokeWidth="1.4">
          <path d="M1 4v15c0 2 4 4 9 4s9-2 9-4V4" />
          <ellipse cx="10" cy="4.500" rx="9" ry="3.500" />
        </svg>
      </div>
      <div className="mt-[2px] flex h-[38px] items-center justify-center border-b border-[#888] bg-[#e6e6e6]">
        <svg width="24" height="24" viewBox="0 0 24 24" fill="none" stroke="#555" strokeWidth="1.3">
          <path d="M1 10h5v12H1zM6 2h6v20H6z" />
          <path d="M14 9v12c0 1 2 2 4 2s5-1 5-2V9" stroke="#d87a1e" />
          <ellipse cx="18.500" cy="9" rx="4.500" ry="2" stroke="#d87a1e" />
        </svg>
      </div>
      <div className="mt-[2px] flex h-[40px] items-center justify-center">
        <svg width="24" height="24" viewBox="0 0 24 24" fill="none" stroke="#555" strokeWidth="1.3">
          <path d="M2 10h5v9H2zM7 2h6v13M13 7h4v4" />
          <path d="M8 23c0-4 2-6 5-6l9-10 1 1-8 11c-1 3-4 4-7 4z" fill="#2b88d8" stroke="#1a6fb5" />
        </svg>
      </div>
      <div className="flex h-[36px] items-center justify-center">
        <svg width="24" height="24" viewBox="0 0 24 24"><path d="M12 1v22M1 12h22" stroke="#222" strokeWidth="1.5" /></svg>
      </div>
      <div className="mt-auto flex h-[40px] items-center justify-center border-t border-[#dcdcdc]">
        <Settings className="h-[24px] w-[24px] text-[#333]" strokeWidth={1.3} />
      </div>
    </div>
  );
}

function StatusBar() {
  return (
    <div className="flex h-[12px] shrink-0 items-start overflow-hidden border-t border-[#dcdcdc] bg-[#f3f2f1] text-[12px] leading-none text-[#444]">
      <span className="ml-[21px] mt-[7px]">Page 1 of 1</span>
      <div className="ml-auto mt-[7px] flex items-start">
        <div className="h-4 w-[4px] bg-[#444]" />
        <span className="ml-[84px]">+</span>
        <span className="ml-[15px]">83%</span>
        <div className="ml-[25px] mr-[20px] h-4 w-[20px] border border-[#555]" />
      </div>
    </div>
  );
}

export default function App() {
  return (
    <div className="relative flex h-[948px] w-[1896px] flex-col overflow-hidden bg-[#f3f2f1] font-['Open_Sans',sans-serif]">
      <Header />
      <div className="flex min-h-0 flex-1">
        <LeftRail />
        <div className="flex w-[1376px] shrink-0 flex-col">
          <div className="flex min-h-0 flex-1">
            <Canvas />
            <Filters />
          </div>
          <PageTabs />
        </div>
        <BuildPane />
        <DataPane />
        <RightRail />
      </div>
      <StatusBar />

      <div className="pointer-events-none absolute left-[833px] top-[812px] flex w-[229px] flex-col items-center text-[#e2e2e2] mix-blend-multiply">
        <div dir="rtl" className="font-['DejaVu_Sans',sans-serif] text-[66px] font-bold leading-[80px] [-webkit-text-stroke:3px_#e2e2e2]">مستقل</div>
        <div className="mt-[1px] text-[36px] font-extrabold leading-[40px]">mostaql.com</div>
      </div>
      <div className="pointer-events-none absolute left-[1531px] top-[862px] text-[#b9b9b9]">
        <div className="text-[25px] font-light leading-[30px]">Activate Windows</div>
        <div className="mt-[2px] text-[15.500px] leading-[24px]">Go to Settings to activate Windows.</div>
      </div>
    </div>
  );
}
